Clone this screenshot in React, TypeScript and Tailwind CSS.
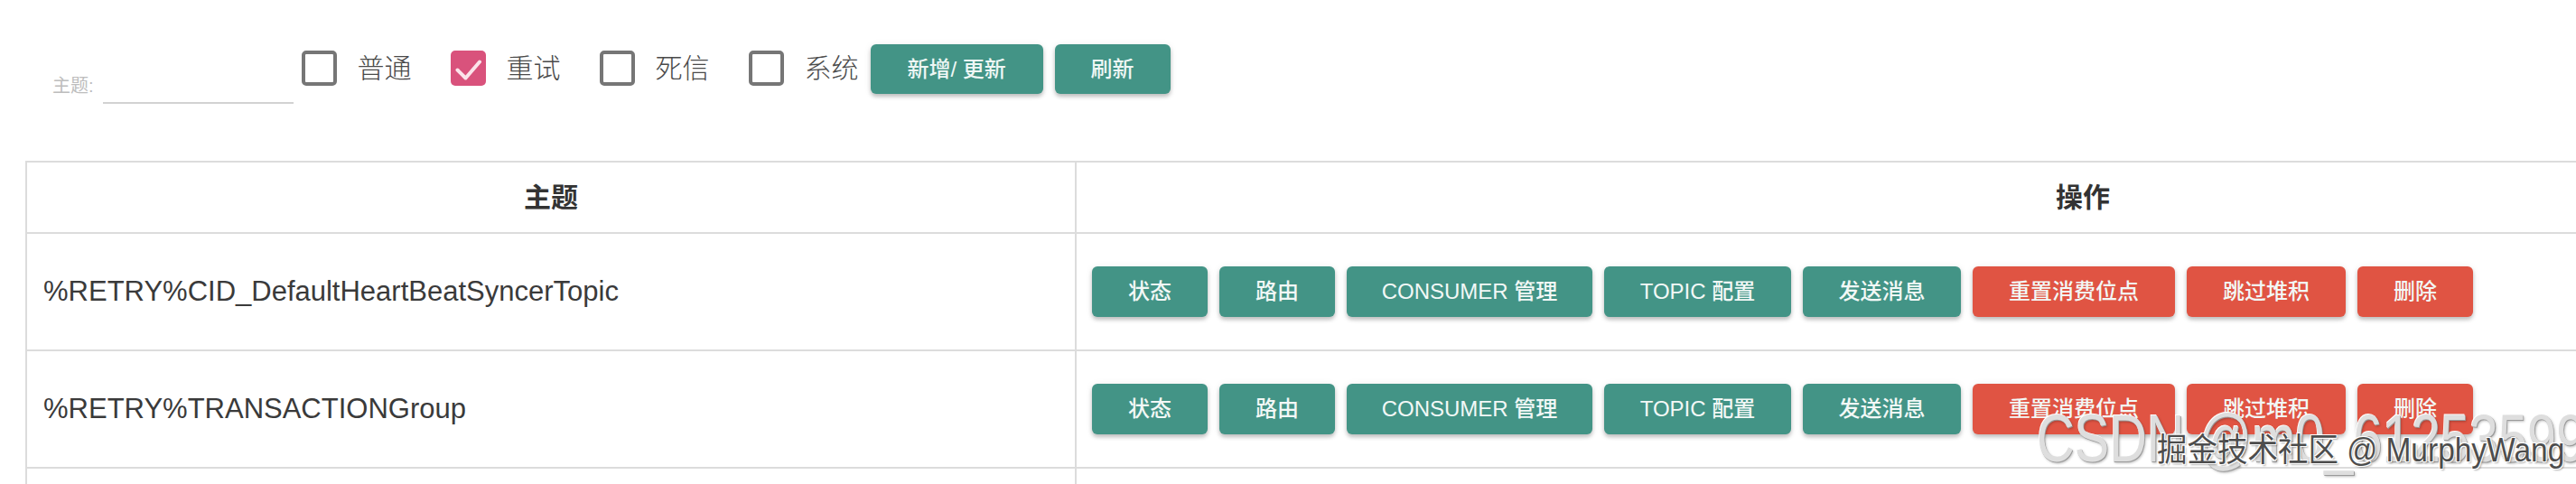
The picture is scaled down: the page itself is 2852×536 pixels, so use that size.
import React from "react";

const CJK = "font-['Liberation_Sans','Noto_Sans_CJK_SC',sans-serif]";

function Box({ checked }: { checked?: boolean }) {
  if (checked) {
    return (
      <span className="flex h-[39px] w-[39px] shrink-0 items-center justify-center rounded-[5px] bg-[#d9527c]">
        <svg width="39" height="39" viewBox="0 0 39 39" fill="none">
          <path d="M7.5 21.5L16.5 30.5L32 12.5" stroke="#fbe3ea" strokeWidth="4" strokeLinecap="round" strokeLinejoin="round" />
        </svg>
      </span>
    );
  }
  return <span className="block h-[39px] w-[39px] shrink-0 rounded-[5px] border-[4px] border-[#767676]" />;
}

function Check({ label, checked }: { label: string; checked?: boolean }) {
  return (
    <label className="flex items-center gap-[23px]">
      <Box checked={checked} />
      <span className="text-[30px] leading-[39px] font-light text-[#4a4a4a]">{label}</span>
    </label>
  );
}

type Btn = { t: string; w: string; red?: boolean };

const rowButtons: Btn[] = [
  { t: "状态", w: "w-[128px]" },
  { t: "路由", w: "w-[128px]" },
  { t: "CONSUMER 管理", w: "w-[272px]" },
  { t: "TOPIC 配置", w: "w-[207px]" },
  { t: "发送消息", w: "w-[175px]" },
  { t: "重置消费位点", w: "w-[224px]", red: true },
  { t: "跳过堆积", w: "w-[176px]", red: true },
  { t: "删除", w: "w-[128px]", red: true },
];

function ActionButton({ b }: { b: Btn }) {
  return (
    <button
      className={`${b.w} ${b.red ? "bg-[#e05443]" : "bg-[#439486]"} flex h-[56px] shrink-0 items-center justify-center rounded-[6px] text-[24px] font-medium text-[#f2f8f6] shadow-[0_3px_4px_rgba(0,0,0,0.22),0_1px_8px_rgba(0,0,0,0.08)]`}
    >
      {b.t}
    </button>
  );
}

const rows = ["%RETRY%CID_DefaultHeartBeatSyncerTopic", "%RETRY%TRANSACTIONGroup", ""];

export default function App() {
  return (
    <div className={`relative h-[536px] w-[2852px] overflow-hidden bg-white ${CJK}`}>
      {/* Toolbar */}
      <div className="flex h-[178px] items-start pl-[58px]">
        <div className="mt-[83px] flex items-start gap-[10px]">
          <span className="text-[20px] leading-[24px] text-[#bdbdbd]">主题:</span>
          <div className="h-[32px] w-[211px] border-b-2 border-[#d2d2d2]" />
        </div>
        <div className="ml-[9px] mt-[56px] flex items-center gap-[43px]">
          <Check label="普通" />
          <Check label="重试" checked />
          <Check label="死信" />
          <Check label="系统" />
        </div>
        <div className="ml-[13px] mt-[49px] flex gap-[13px]">
          <button className="flex h-[55px] w-[191px] items-center justify-center rounded-[6px] bg-[#439486] text-[24px] font-medium text-[#eef7f5] shadow-[0_3px_4px_rgba(0,0,0,0.22),0_1px_8px_rgba(0,0,0,0.08)]">
            新增/ 更新
          </button>
          <button className="flex h-[55px] w-[128px] items-center justify-center rounded-[6px] bg-[#439486] text-[24px] font-medium text-[#eef7f5] shadow-[0_3px_4px_rgba(0,0,0,0.22),0_1px_8px_rgba(0,0,0,0.08)]">
            刷新
          </button>
        </div>
      </div>

      {/* Table */}
      <div className="ml-[28px] w-[3392px] border-l-2 border-t-2 border-[#dcdcdc]">
        <div className="flex h-[79px] border-b-2 border-[#dcdcdc]">
          <div className="flex w-[1162px] items-center justify-center border-r-2 border-[#dcdcdc] text-[30px] font-bold text-[#333]">
            主题
          </div>
          <div className="flex flex-1 items-center justify-center text-[30px] font-bold text-[#333]">操作</div>
        </div>
        {rows.map((r, i) => (
          <div key={i} className="flex h-[130px] border-b-2 border-[#dcdcdc]">
            <div className="flex w-[1162px] items-center border-r-2 border-[#dcdcdc] pl-[18px] text-[31px] text-[#3a3a3a]">
              {r}
            </div>
            <div className="flex flex-1 items-center gap-[13px] pl-[17px]">
              {r && rowButtons.map((b) => <ActionButton key={b.t} b={b} />)}
            </div>
          </div>
        ))}
      </div>

      {/* Watermarks */}
      <div className="pointer-events-none absolute left-[2255px] top-[446px] origin-left scale-x-[0.78] whitespace-nowrap text-[74px] leading-[80px] text-[#dedede] [text-shadow:1px_1px_0_#9a9a9a,2px_2px_3px_rgba(0,0,0,0.25),-1px_-1px_0_#ffffff]">
        CSDN @m0_61253599
      </div>
      <div className="pointer-events-none absolute left-[2388px] top-[478px] origin-left scale-x-[0.93] whitespace-nowrap text-[36px] leading-[42px] text-[#4d4d4d] [text-shadow:-1px_-1px_0_#fff,1px_-1px_0_#fff,-1px_1px_0_#fff,1px_1px_0_#fff,2px_2px_2px_rgba(0,0,0,0.3)]">
        掘金技术社区 @ MurphyWang
      </div>
    </div>
  );
}
